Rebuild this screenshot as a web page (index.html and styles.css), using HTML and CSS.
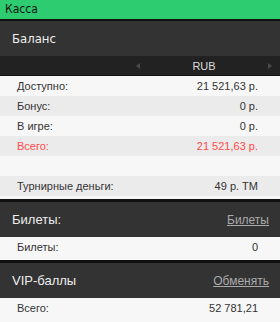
FILE: index.html
```html
<!DOCTYPE html>
<html lang="ru">
<head>
<meta charset="utf-8">
<title>Касса</title>
<link rel="stylesheet" href="styles.css">
</head>
<body>
<div class="topbar">Касса</div>

<section class="panel">
  <div class="panel-head"><span class="title-main">Баланс</span></div>
  <div class="currency">
    <div class="selector">
      <span class="arrow arrow-left"></span>
      <span class="cur">RUB</span>
      <span class="arrow arrow-right"></span>
    </div>
  </div>
  <div class="rows">
    <div class="row"><span>Доступно:</span><span>21 521,63 р.</span></div>
    <div class="row"><span>Бонус:</span><span>0 р.</span></div>
    <div class="row"><span>В игре:</span><span>0 р.</span></div>
    <div class="row row-total"><span>Всего:</span><span>21 521,63 р.</span></div>
    <div class="row"></div>
    <div class="row"><span>Турнирные деньги:</span><span>49 р. ТМ</span></div>
  </div>
</section>

<section class="panel panel-sep">
  <div class="panel-head"><span class="title">Билеты:</span><a class="link" href="#">Билеты</a></div>
  <div class="rows">
    <div class="row"><span>Билеты:</span><span>0</span></div>
  </div>
</section>

<section class="panel panel-sep">
  <div class="panel-head"><span class="title">VIP-баллы</span><a class="link" href="#">Обменять</a></div>
  <div class="rows">
    <div class="row"><span>Всего:</span><span>52 781,21</span></div>
  </div>
</section>
</body>
</html>
```

FILE: styles.css
```css
html, body {
  margin: 0;
  padding: 0;
  background: #f7f7f7;
}
body {
  width: 280px;
  height: 322px;
  overflow: hidden;
  font-family: "Liberation Sans", Arial, sans-serif;
}
.topbar {
  height: 19px;
  line-height: 19px;
  background: #2ecc71;
  color: #111;
  padding-left: 5px;
  font-family: "DejaVu Sans Condensed", "DejaVu Sans", sans-serif;
  font-size: 12px;
  border-bottom: 2px solid #111;
}
.panel {
  background: #f7f7f7;
  padding-bottom: 3px;
}
.panel-sep {
  border-top: 3px solid #111;
}
.panel-head {
  height: 35px;
  background: #333;
  display: flex;
  align-items: center;
  justify-content: space-between;
  padding: 0 11px 0 12px;
  color: #eee;
}
.title-main {
  font-family: "DejaVu Sans Condensed", "DejaVu Sans", sans-serif;
  font-size: 13px;
  color: #eee;
}
.title {
  font-size: 13px;
  color: #eee;
}
.link {
  font-size: 12px;
  color: #aaa;
  text-decoration: underline;
}
.currency {
  height: 19px;
  background: #222;
  border-bottom: 1px solid #111;
  display: flex;
  justify-content: flex-end;
}
.selector {
  width: 136px;
  padding-right: 8px;
  display: flex;
  align-items: center;
  justify-content: space-between;
}
.cur {
  font-size: 11px;
  color: #ddd;
}
.arrow {
  width: 0;
  height: 0;
  border-top: 3.5px solid transparent;
  border-bottom: 3.5px solid transparent;
}
.arrow-left {
  border-right: 4px solid #4a4a4a;
}
.arrow-right {
  border-left: 4px solid #4a4a4a;
}
.row {
  height: 20px;
  display: flex;
  align-items: center;
  justify-content: space-between;
  padding: 0 22px 0 17px;
  font-size: 11px;
  color: #333;
  background: #f7f7f7;
}
.rows .row:nth-child(even) {
  background: #ebebeb;
}
.row-total {
  color: #ff4a4a;
}
```
